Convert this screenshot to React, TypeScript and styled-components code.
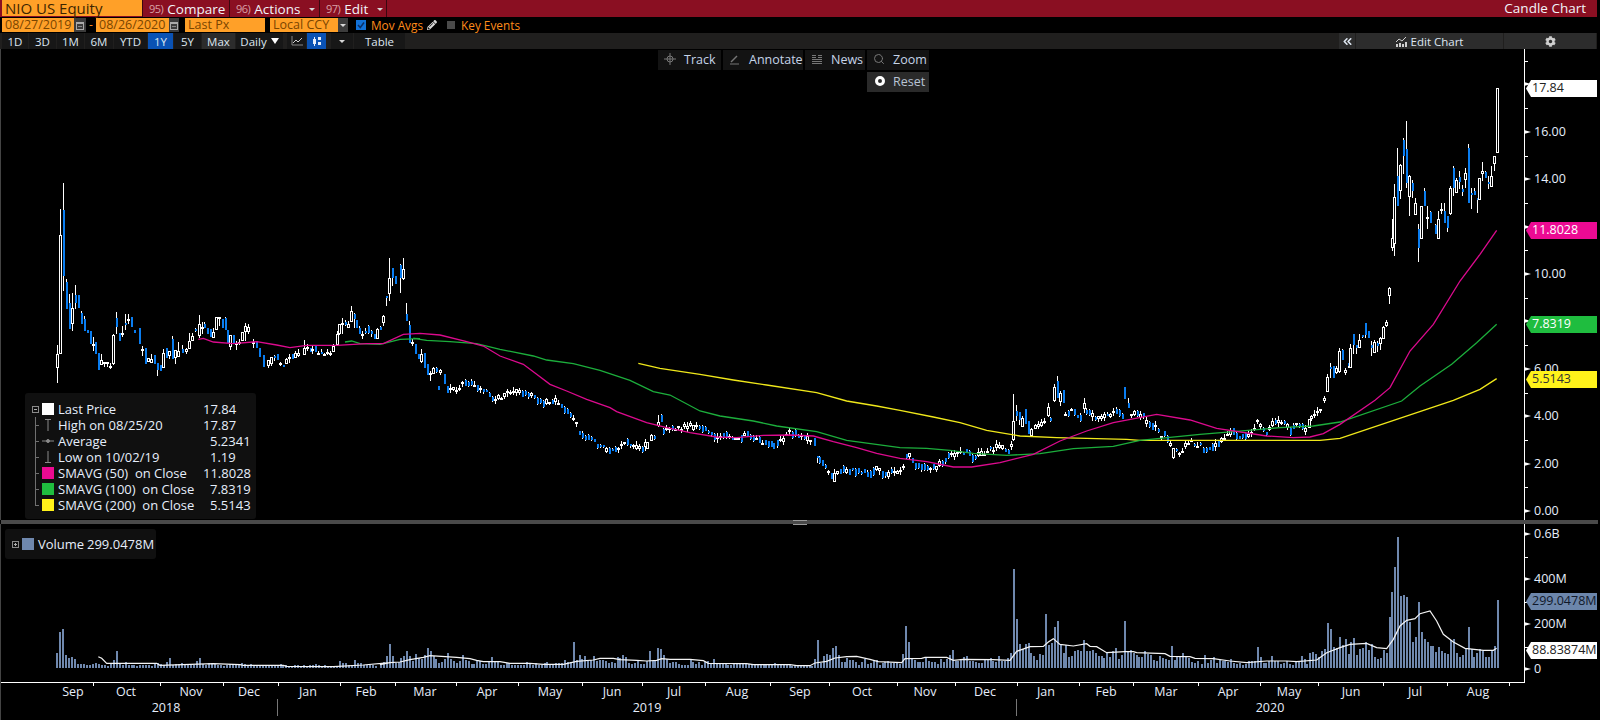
import React from "react";
import styled, { createGlobalStyle } from "styled-components";
import { FaCog, FaPencilAlt } from "react-icons/fa";
import { ChevronsLeft, Search } from "lucide-react";

type Pt = [number, number];
type Raw = [number, number, number, number?, number?, number?];
interface Candle {
  x: number;
  top: number;
  bot: number;
  hi: number;
  lo: number;
  blue: boolean;
}

const SANS = `"Open Sans", "Noto Sans", sans-serif`;
const AXIS_X = 1524;

const GlobalStyle = createGlobalStyle`
  html, body { margin: 0; padding: 0; background: #000; }
  body { font-family: ${SANS}; }
`;

// all series below are read off 3x crops, so each has an origin to convert from
const toPts = (ox: number, oy: number, list: number[][]): Pt[] =>
  list.map(([a, b]) => [ox + a / 3, oy + b / 3]);

const yAt = (pts: Pt[], x: number) => {
  for (let i = 1; i < pts.length; i++) {
    if (x <= pts[i][0]) {
      const [x0, y0] = pts[i - 1];
      const [x1, y1] = pts[i];
      return y0 + ((y1 - y0) * (x - x0)) / (x1 - x0 || 1);
    }
  }
  return pts[pts.length - 1][1];
};

const poly = (pts: Pt[]) => pts.map((p) => p.join(",")).join(" ");

const rng = (seed: number) => () => {
  seed = (seed + 0x6d2b79f5) | 0;
  let t = Math.imul(seed ^ (seed >>> 15), 1 | seed);
  t = (t + Math.imul(t ^ (t >>> 7), 61 | t)) ^ t;
  return ((t ^ (t >>> 14)) >>> 0) / 4294967296;
};

const raw = (ox: number, oy: number, list: Raw[]): Candle[] =>
  list.map(([zx, top, bot, hi, lo, blue]) => ({
    x: Math.round(ox + zx / 3),
    top: oy + top / 3,
    bot: oy + bot / 3,
    hi: oy + (hi ?? top) / 3,
    lo: oy + (lo ?? bot) / 3,
    blue: !!blue,
  }));

const START: Raw[] = [
  [172, 548, 590, 522, 635], [181, 192, 548, 114, 548], [190, 118, 315, 37, 360, 1],
  [198, 333, 413, 325, 413, 1], [207, 396, 473, 370, 473, 1], [216, 412, 458, 366, 480],
  [225, 372, 396, 342, 415, 1], [234, 372, 410, 372, 410, 1], [243, 425, 458, 420, 458, 1],
  [252, 443, 480, 435, 480, 1], [261, 478, 485, 478, 485, 1], [270, 480, 520, 480, 520, 1],
  [278, 518, 522, 498, 540], [285, 513, 548, 513, 548, 1], [294, 546, 597, 546, 597, 1],
  [303, 567, 583, 550, 583], [312, 572, 578, 572, 588], [321, 572, 578, 572, 588],
  [330, 585, 588, 575, 595], [340, 492, 578, 490, 582], [348, 440, 468, 423, 490, 1],
  [357, 487, 510, 487, 510, 1], [366, 487, 489, 465, 497], [375, 457, 463, 428, 478, 1],
  [384, 443, 445, 430, 460], [393, 437, 468, 437, 468, 1], [402, 477, 485, 477, 485, 1],
  [411, 478, 500, 478, 500, 1], [416, 472, 518, 472, 518, 1], [427, 533, 539, 525, 555],
  [435, 530, 578, 530, 578, 1], [445, 560, 572, 560, 572], [454, 565, 575, 550, 575],
  [463, 552, 580, 552, 580, 1], [472, 575, 597, 575, 614, 1], [480, 582, 600, 582, 600, 1],
  [490, 547, 590, 535, 590], [498, 532, 560, 532, 560, 1], [508, 540, 555, 540, 565],
  [516, 503, 565, 495, 565, 1], [525, 538, 560, 538, 578], [535, 540, 557, 512, 557],
  [546, 535, 547, 522, 547, 1], [558, 535, 543, 530, 548], [568, 511, 533, 487, 533],
  [577, 495, 509, 487, 509], [586, 473, 478, 470, 482, 1], [596, 460, 495, 432, 500],
  [605, 469, 471, 452, 490], [613, 458, 472, 452, 472, 1], [621, 470, 490, 470, 490, 1],
  [630, 475, 497, 475, 497, 1], [640, 483, 500, 470, 500], [649, 439, 478, 439, 478],
  [658, 437, 439, 437, 465], [666, 445, 470, 445, 470, 1], [675, 440, 478, 438, 478, 1],
  [681, 478, 517, 478, 517, 1], [691, 493, 528, 493, 536], [698, 492, 520, 492, 520, 1],
  [708, 516, 518, 510, 536], [717, 514, 516, 505, 522], [727, 482, 510, 482, 510],
  [736, 465, 482, 455, 510], [744, 468, 484, 458, 490], [752, 475, 518, 475, 522, 1],
  [760, 512, 514, 505, 530], [768, 510, 532, 510, 532, 1], [778, 530, 558, 530, 558, 1],
  [788, 552, 588, 552, 588, 1], [797, 590, 597, 585, 600, 1], [805, 567, 585, 567, 590],
  [814, 558, 578, 558, 585], [822, 556, 562, 552, 570, 1], [830, 550, 568, 548, 568, 1],
  [840, 577, 579, 572, 585], [848, 582, 587, 582, 587, 1], [858, 565, 578, 560, 578],
  [867, 557, 562, 550, 575], [876, 550, 565, 548, 565, 1], [885, 545, 562, 540, 562],
  [895, 545, 555, 535, 558], [905, 550, 557, 542, 557], [913, 530, 553, 508, 553],
  [921, 529, 531, 520, 540], [929, 530, 543, 530, 543, 1], [937, 533, 540, 525, 550],
  [945, 525, 543, 525, 543, 1], [955, 547, 549, 540, 552], [964, 544, 550, 535, 550, 1],
  [973, 550, 556, 545, 556], [982, 544, 546, 535, 552], [991, 545, 552, 540, 554],
  [1000, 525, 542, 520, 542], [1010, 488, 522, 480, 525], [1018, 458, 490, 458, 492],
  [1027, 457, 459, 440, 490], [1036, 452, 462, 448, 465, 1], [1045, 458, 470, 450, 472],
  [1054, 420, 452, 405, 452], [1063, 430, 445, 425, 470, 1], [1068, 447, 472, 447, 472, 1],
  [1077, 470, 488, 465, 490, 1], [1087, 488, 495, 480, 505], [1096, 480, 485, 470, 490, 1],
  [1105, 465, 485, 462, 490, 1], [1114, 480, 490, 478, 498, 1], [1122, 490, 503, 490, 503, 1],
  [1132, 475, 503, 470, 503], [1140, 468, 478, 465, 478, 1], [1150, 435, 457, 432, 465],
  [1158, 375, 380, 375, 405, 1], [1168, 320, 368, 262, 390], [1176, 292, 320, 290, 345, 1],
  [1185, 315, 340, 315, 340, 1], [1193, 302, 320, 295, 325], [1201, 282, 320, 280, 365, 1],
  [1210, 295, 325, 262, 328], [1219, 430, 450, 397, 450, 1], [1227, 462, 515, 450, 515, 1],
  [1236, 514, 516, 505, 525], [1245, 520, 548, 520, 548, 1], [1254, 545, 563, 545, 563, 1],
];

const MID_A: Raw[] = [
  [38, 62, 72, 55, 78], [45, 70, 98, 70, 98, 1], [53, 98, 113, 98, 113, 1], [64, 100, 122, 85, 125],
  [72, 97, 140, 97, 140, 1], [81, 130, 162, 130, 162, 1], [90, 155, 163, 150, 180],
  [100, 140, 158, 138, 158], [108, 140, 152, 138, 155, 1], [120, 148, 155, 145, 162],
  [132, 160, 190, 160, 190, 1], [140, 195, 215, 195, 215, 1], [742, 363, 384, 363, 384],
  [752, 343, 360, 340, 360], [770, 318, 340, 318, 340], [775, 302, 315, 283, 318],
  [782, 283, 302, 280, 302, 1], [1118, 365, 384, 365, 384, 1], [1242, 352, 375, 352, 375, 1],
  [1250, 406, 412, 406, 425, 1], [1292, 455, 475, 455, 475, 1], [1303, 455, 482, 445, 482],
];

const MID_B: Raw[] = [
  [340, 240, 298, 160, 300], [348, 210, 225, 192, 240, 1], [357, 212, 238, 212, 252, 1],
  [367, 232, 258, 226, 258], [375, 205, 250, 205, 250, 1], [383, 240, 278, 240, 278, 1],
  [394, 265, 285, 262, 288], [443, 198, 225, 185, 228], [455, 172, 188, 172, 190],
  [463, 138, 180, 130, 182], [470, 120, 170, 105, 172, 1], [481, 155, 182, 150, 195],
  [490, 148, 185, 148, 185, 1], [545, 215, 258, 212, 258], [553, 185, 205, 172, 215],
  [672, 138, 175, 138, 175, 1], [684, 185, 202, 172, 202, 1], [818, 322, 350, 322, 355],
  [1228, 235, 262, 235, 262], [1273, 170, 198, 170, 198], [1283, 108, 152, 98, 152],
  [1290, 75, 110, 75, 110, 1], [1298, 78, 112, 72, 115, 1], [1310, 80, 95, 75, 98],
];

const END: Raw[] = [
  [133, 950, 960, 945, 965], [142, 888, 932, 880, 932], [151, 858, 862, 845, 890, 1],
  [160, 855, 890, 855, 892, 1], [169, 860, 875, 855, 878], [178, 810, 872, 800, 875],
  [187, 808, 838, 805, 838, 1], [196, 868, 875, 860, 882], [205, 845, 855, 845, 860, 1],
  [211, 800, 862, 790, 862], [219, 758, 792, 758, 820, 1], [228, 792, 802, 792, 820, 1],
  [237, 778, 802, 760, 802], [246, 762, 768, 762, 770, 1], [255, 726, 762, 726, 772, 1],
  [264, 750, 772, 750, 772, 1], [273, 792, 800, 780, 825, 1], [282, 783, 815, 778, 815],
  [291, 785, 795, 780, 812, 1], [300, 772, 790, 768, 808], [310, 738, 775, 735, 775],
  [319, 723, 735, 717, 738], [328, 621, 645, 618, 668], [337, 470, 502, 415, 510],
  [343, 348, 488, 310, 524], [351, 285, 375, 200, 375, 1], [361, 252, 330, 250, 355],
  [369, 178, 225, 172, 278, 1], [379, 205, 305, 120, 320, 1], [388, 285, 347, 283, 405],
  [396, 305, 330, 297, 350, 1], [406, 367, 403, 352, 403], [415, 445, 500, 428, 542, 1],
  [424, 376, 475, 376, 475], [433, 330, 375, 322, 375, 1], [442, 407, 409, 375, 445],
  [451, 393, 425, 390, 425, 1], [460, 447, 480, 447, 510], [465, 432, 458, 428, 458, 1],
  [475, 415, 473, 390, 475], [484, 385, 387, 365, 400], [492, 390, 425, 365, 425, 1],
  [501, 405, 440, 405, 452, 1], [511, 321, 398, 315, 402], [519, 262, 320, 255, 345, 1],
  [529, 298, 335, 290, 335], [537, 287, 304, 270, 325, 1], [546, 323, 333, 312, 345, 1],
  [556, 277, 298, 262, 320], [564, 201, 365, 190, 365, 1], [573, 335, 342, 322, 385, 1],
  [582, 330, 342, 320, 342, 1], [591, 352, 358, 352, 395, 1], [598, 290, 358, 290, 358],
  [607, 270, 278, 243, 300], [615, 273, 290, 270, 292, 1], [624, 303, 310, 285, 325, 1],
  [634, 285, 318, 255, 318], [643, 226, 250, 224, 270], [652, 20, 217, 20, 217],
];

// mid-price path for the long stretch that is generated instead of listed
const PATH: Pt[] = [
  ...toPts(400, 320, [
    [150, 205], [170, 205], [190, 180], [230, 195], [265, 220], [272, 240], [290, 235], [320, 215],
    [350, 215], [380, 215], [400, 230], [430, 250], [460, 235], [490, 265], [510, 285], [525, 300],
    [537, 330], [550, 350], [575, 355], [590, 372], [620, 382], [640, 392], [660, 375], [675, 365],
    [700, 380], [720, 384], [742, 372], [795, 320], [830, 325], [875, 312], [915, 320], [940, 350],
    [970, 345], [1010, 355], [1040, 342], [1070, 355], [1118, 375], [1140, 360], [1165, 335],
    [1205, 345], [1240, 362], [1250, 410], [1272, 430], [1292, 470], [1310, 452], [1340, 445],
    [1370, 452], [1410, 458], [1425, 445], [1460, 460],
  ]),
  ...toPts(900, 340, [
    [5, 385], [15, 355], [25, 340], [45, 370], [75, 378], [105, 378], [125, 368], [155, 338], [175, 338],
    [195, 332], [215, 348], [250, 338], [265, 325], [300, 316], [330, 330], [340, 270], [410, 258],
    [430, 240], [500, 215], [520, 205], [535, 230], [565, 210], [578, 230], [595, 230], [610, 220],
    [630, 225], [648, 210], [665, 232], [695, 215], [715, 215], [735, 235], [745, 255], [765, 258],
    [780, 285], [790, 280], [800, 295], [818, 335], [830, 330], [842, 340], [852, 320], [868, 300],
    [885, 310], [905, 315], [915, 335], [940, 310], [960, 305], [975, 290], [990, 272], [1020, 285],
    [1050, 285], [1070, 240], [1080, 255], [1095, 275], [1115, 250], [1135, 240], [1155, 250],
    [1170, 265], [1190, 248], [1205, 250], [1215, 270], [1240, 215], [1265, 210],
  ]),
];

const buildCandles = (): Candle[] => {
  const slots = new Map<number, Candle>();
  const put = (c: Candle) => slots.set(Math.round(c.x / 3), c);
  [...raw(0, 170, START), ...raw(400, 320, MID_A), ...raw(900, 340, MID_B), ...raw(1280, 80, END)].forEach(put);
  const r = rng(51);
  for (let x = 420; x < 1322; x += 3) {
    if (slots.has(Math.round(x / 3))) continue;
    const mid = yAt(PATH, x) + (r() - 0.5) * 4;
    const falling = yAt(PATH, x + 6) > yAt(PATH, x - 6);
    const blue = r() < (falling ? 0.7 : 0.3);
    const half = blue ? 1 + r() * 2.5 : r() < 0.4 ? 0.5 : 1 + r() * 1.5;
    put({
      x,
      top: mid - half,
      bot: mid + half,
      hi: mid - half - (blue ? r() * 1.5 : r() * 4),
      lo: mid + half + (blue ? r() * 1.5 : r() * 4),
      blue,
    });
  }
  return [...slots.values()].sort((a, b) => a.x - b.x);
};

const PINK: Pt[] = [
  ...toPts(0, 170, [[595, 505], [610, 502], [640, 513], [700, 518], [770, 512], [830, 522], [870, 530], [920, 523], [1010, 523], [1100, 518], [1150, 518], [1210, 490]]),
  ...toPts(400, 320, [[60, 37], [120, 42], [200, 62], [250, 75], [300, 105], [370, 130], [410, 160], [450, 190], [500, 210], [560, 235], [630, 260], [650, 272], [740, 305], [800, 320], [870, 335], [950, 348], [1010, 350], [1090, 343], [1170, 342], [1240, 345], [1300, 362], [1370, 380], [1430, 397], [1500, 412]]),
  ...toPts(900, 340, [[80, 362], [160, 378], [215, 378], [300, 365], [400, 340], [480, 300], [560, 270], [640, 245], [770, 220], [870, 237], [950, 262], [1100, 285], [1180, 290], [1230, 288], [1270, 278], [1320, 250]]),
  ...toPts(1280, 80, [[285, 958], [330, 920], [390, 810], [460, 730], [540, 600], [600, 520], [650, 448]]),
];

const GREEN: Pt[] = [
  ...toPts(0, 170, [[1035, 513], [1055, 510], [1080, 518], [1140, 520], [1200, 505], [1260, 503]]),
  ...toPts(400, 320, [[40, 52], [80, 58], [150, 62], [230, 68], [300, 85], [400, 105], [440, 117], [520, 128], [600, 148], [690, 178], [760, 212], [810, 222], [900, 270], [960, 285], [1060, 300], [1130, 315], [1250, 332], [1340, 358], [1500, 380]]),
  ...toPts(900, 340, [[80, 322], [150, 328], [220, 337], [320, 343], [420, 338], [520, 323], [640, 316], [720, 298], [900, 280], [1000, 272], [1140, 260], [1240, 255], [1320, 243]]),
  ...toPts(1280, 80, [[365, 960], [420, 915], [515, 850], [590, 785], [650, 730]]),
];

const YELLOW: Pt[] = [
  ...toPts(400, 320, [[715, 127], [780, 142], [900, 160], [1000, 177], [1100, 192], [1250, 215], [1340, 240], [1430, 255], [1500, 268]]),
  ...toPts(900, 340, [[100, 228], [180, 245], [260, 268], [360, 285], [470, 290], [680, 295], [720, 298], [1000, 298], [1260, 298], [1320, 292]]),
  ...toPts(1280, 80, [[520, 958], [600, 925], [650, 893]]),
];

const VOL_AVG: Pt[] = [
  ...toPts(0, 510, [[295, 437], [305, 442], [320, 457], [470, 457], [480, 463], [640, 458], [720, 461], [730, 463], [850, 463], [860, 466], [1000, 467], [1090, 462], [1170, 455]]),
  ...toPts(380, 512, [[0, 455], [30, 449], [60, 447], [90, 440], [130, 433], [150, 428], [230, 433], [270, 437], [290, 442], [310, 446], [360, 446], [390, 451], [450, 451], [490, 454], [550, 454], [590, 445], [640, 441], [660, 436], [700, 436], [720, 440], [770, 442], [800, 444], [830, 442], [845, 437], [870, 439], [930, 439], [970, 443], [985, 451], [1100, 452], [1120, 455], [1230, 455], [1250, 458]]),
  ...toPts(790, 555, [[20, 329], [60, 329], [75, 321], [110, 316], [135, 306], [170, 302], [200, 301], [240, 310], [265, 317], [335, 320], [345, 308], [395, 307], [405, 304], [470, 304], [490, 313], [520, 310], [610, 311], [660, 313], [680, 286], [720, 272], [760, 271], [775, 258], [790, 248], [810, 265], [850, 270], [890, 263], [900, 271], [920, 272], [950, 290], [1005, 287], [1030, 287], [1040, 290], [1125, 293], [1140, 301], [1200, 302], [1215, 307]]),
  ...toPts(1200, 510, [[40, 443], [90, 450], [140, 455], [200, 450], [260, 450], [290, 452], [350, 447], [380, 425], [420, 410], [450, 400], [500, 397], [530, 410], [560, 413], [580, 385], [600, 345], [620, 328], [645, 323], [660, 308], [690, 300], [710, 330], [730, 370], [760, 393], [795, 412], [850, 418], [880, 418], [890, 412]]),
];

const VOL_LEFT = [15, 36, 39, 13, 10, 11, 9, 4, 4, 4, 3, 3, 4, 5, 4, 3, 3, 2, 4, 8, 17, 4, 3, 6, 3, 3, 3, 2, 3, 3, 3, 3, 2, 5, 5, 4, 3, 6, 10, 3, 4, 4, 5, 4, 3, 3, 3, 7, 10, 4, 3, 5, 5, 4, 3, 3, 2, 3, 4, 4, 3, 4, 5, 4, 3, 4, 2, 3, 3, 2, 3, 2, 3, 2, 3, 4, 3, 3, 2, 2, 3, 3, 2, 3, 2, 3, 3, 4, 3, 2, 3, 2, 2, 2, 2, 7, 5, 5, 3, 3, 8, 5, 5, 3, 3, 3, 3, 2];
const VOL_A = [3, 6, 12, 24, 12, 5, 6, 10, 12, 17, 12, 7, 14, 10, 9, 13, 20, 17, 12, 9, 5, 6, 9, 15, 9, 7, 5, 7, 13, 8, 7, 4, 4, 7, 7, 4, 4, 6, 11, 6, 6, 3, 3, 5, 5, 3, 3, 3, 3, 3, 6, 5, 3, 5, 3, 3, 5, 6, 3, 3, 5, 5, 5, 8, 6, 6, 26, 8, 13, 9, 12, 7, 8, 12, 7, 8, 8, 7, 5, 6, 5, 11, 10, 13, 11, 5, 4, 5, 7, 4, 4, 7, 17, 7, 7, 20, 19, 13, 9, 5, 6, 6, 4, 3, 3, 3, 8, 6, 4, 6, 3, 6, 7, 5, 9, 5, 4, 4, 4, 3, 3, 4, 5, 4, 4, 4, 4, 3, 4, 4, 3, 3, 3, 3, 3, 5, 3, 4, 3, 4, 3, 3, 3, 3, 2, 3];
const VOL_B = [2, 2, 2, 2, 2, 2, 2, 2, 9, 28, 5, 12, 14, 13, 20, 22, 13, 6, 6, 10, 8, 8, 6, 3, 6, 9, 4, 5, 8, 8, 3, 5, 6, 7, 5, 5, 5, 4, 14, 42, 26, 9, 8, 6, 6, 6, 10, 7, 6, 6, 4, 9, 6, 9, 13, 18, 7, 7, 8, 11, 12, 7, 7, 6, 5, 5, 9, 9, 10, 7, 6, 12, 7, 7, 10, 15, 99, 49, 24, 19, 24, 25, 15, 12, 8, 14, 13, 54, 23, 25, 41, 47, 23, 15, 23, 11, 12, 17, 18, 17, 28, 17, 17, 18, 15, 12, 12, 10, 15, 11, 17, 20, 9, 13, 47, 17, 18, 15, 13, 11, 11, 17, 14, 13, 8, 7, 12, 10, 9, 8, 22, 8, 12, 11, 15, 12, 10, 6, 5, 7];
const VOL_C = [4, 13, 5, 8, 11, 5, 8, 7, 7, 6, 9, 5, 4, 5, 3, 4, 7, 7, 7, 21, 11, 5, 5, 7, 12, 7, 7, 4, 5, 7, 4, 3, 6, 6, 12, 9, 4, 15, 16, 14, 11, 17, 19, 45, 39, 21, 20, 31, 23, 29, 14, 26, 30, 13, 19, 20, 26, 18, 24, 11, 9, 10, 18, 15, 51, 76, 101, 131, 72, 73, 71, 46, 26, 31, 66, 36, 29, 26, 22, 22, 16, 21, 17, 15, 14, 28, 29, 15, 11, 13, 20, 41, 19, 11, 15, 19, 17, 11, 11, 17, 22, 68];

const buildVolumes = () => {
  const bars: { x: number; h: number }[] = [];
  const run = (start: number, step: number, end: number, list: number[]) =>
    list.forEach((h, i) => {
      const x = Math.round(start + i * step);
      if (x < end) bars.push({ x, h });
    });
  run(56, 2.98, 379, VOL_LEFT);
  run(380, 2.92, 790, VOL_A);
  run(791, 2.92, 1200, VOL_B);
  run(1201, 2.93, 1500, VOL_C);
  return bars;
};

const priceY = (p: number) => 510 - 23.7 * p;
const volY = (m: number) => 668 - 0.2245 * m;

const MONTHS: [string, number][] = [
  ["Sep", 73], ["Oct", 126], ["Nov", 191], ["Dec", 249], ["Jan", 308], ["Feb", 366], ["Mar", 425],
  ["Apr", 487], ["May", 550], ["Jun", 612], ["Jul", 674], ["Aug", 737], ["Sep", 800], ["Oct", 862],
  ["Nov", 925], ["Dec", 985], ["Jan", 1046], ["Feb", 1106], ["Mar", 1166], ["Apr", 1228], ["May", 1289],
  ["Jun", 1351], ["Jul", 1415], ["Aug", 1478],
];
const MONTH_TICKS = [93, 160, 223, 278, 340, 395, 456, 518, 582, 642, 705, 770, 829, 897, 955, 1017, 1079, 1133, 1198, 1260, 1318, 1383, 1447, 1509];

const Page = styled.div`
  width: 1600px;
  height: 720px;
  background: #000;
  overflow: hidden;
  display: flex;
  flex-direction: column;
  font-family: ${SANS};
`;

const TopBar = styled.div`
  width: 1597px;
  height: 17px;
  flex: none;
  background: #8a0f22;
  display: flex;
  color: #f2f4fa;
  font-size: 13.5px;
  line-height: 16px;
`;

const Ticker = styled.div`
  width: 137px;
  margin-left: 2px;
  padding-left: 3px;
  height: 16px;
  background: #ffa028;
  color: #3d2500;
  font-size: 15px;
  line-height: 16px;
  white-space: nowrap;
`;

const MenuButton = styled.div<{ $w: number }>`
  width: ${(p) => p.$w}px;
  box-sizing: border-box;
  padding-left: 6px;
  border-left: 1px solid #3a0710;
  display: flex;
  align-items: center;
  gap: 4px;
  white-space: nowrap;
  &:nth-of-type(4) {
    border-right: 1px solid #3a0710;
  }
`;

const MenuNum = styled.span`
  color: #d9a0a8;
  font-size: 11px;
  letter-spacing: -0.5px;
`;

const Caret = styled.span`
  width: 0;
  height: 0;
  flex: none;
  border-left: 3px solid transparent;
  border-right: 3px solid transparent;
  border-top: 3px solid #d8d8d8;
`;

const MenuCaret = styled(Caret)`
  margin: 1px 0 0 5px;
`;

const DailyCaret = styled(Caret)`
  border-left-width: 4px;
  border-right-width: 4px;
  border-top: 6px solid #fff;
`;

const ChartTitle = styled.div`
  margin-left: auto;
  padding-right: 11px;
`;

const ControlRow = styled.div`
  height: 14px;
  flex: none;
  margin-top: 1px;
  padding-bottom: 1px;
  display: flex;
  align-items: stretch;
  font-size: 12px;
  line-height: 14px;
`;

const Field = styled.div<{ $w: number; $ml?: number }>`
  width: ${(p) => p.$w}px;
  margin-left: ${(p) => p.$ml ?? 0}px;
  box-sizing: border-box;
  padding-left: 3px;
  background: #ffa028;
  color: #7a4500;
  font-size: 12.5px;
  white-space: nowrap;
`;

const SideButton = styled.div<{ $w: number; $ml?: number }>`
  width: ${(p) => p.$w}px;
  margin-left: ${(p) => p.$ml ?? 0}px;
  background: #3c3c3c;
  display: flex;
  align-items: center;
  justify-content: center;
`;

const Dash = styled.span`
  width: 10px;
  text-align: center;
  color: #ff8c1a;
`;

const Check = styled.div`
  width: 10px;
  height: 10px;
  margin: 2px 0 0 8px;
  background: #1272d8;
  display: flex;
`;

const OffBox = styled.div`
  width: 8px;
  height: 8px;
  margin: 3px 0 0 10px;
  background: #4a4a4a;
`;

const Amber = styled.span<{ $ml: number }>`
  margin-left: ${(p) => p.$ml}px;
  color: #ff8c1a;
  font-size: 11.8px;
  white-space: nowrap;
`;

const PencilWrap = styled.span`
  margin: 2px 0 0 4px;
  color: #d8d8d8;
  display: flex;
  font-size: 10px;
`;

const RangeRow = styled.div`
  width: 1597px;
  height: 16px;
  flex: none;
  box-sizing: border-box;
  padding-left: 2px;
  background: #201f1e;
  display: flex;
  font-size: 11.5px;
  line-height: 15px;
  color: #dfe7f2;
`;

const RangeButton = styled.div<{ $w: number; $ml?: number; $tone?: "active" | "raised" | "dark" }>`
  width: ${(p) => p.$w}px;
  margin-left: ${(p) => p.$ml ?? 0}px;
  margin-right: 1px;
  flex: none;
  display: flex;
  align-items: center;
  justify-content: center;
  gap: 4px;
  background: ${(p) =>
    p.$tone === "active" ? "#0a52b4" : p.$tone === "raised" ? "#2c2c2c" : "#171717"};
`;

const RangeSpacer = styled.div`
  flex: 1;
`;

const PricePanel = styled.div`
  position: relative;
  height: 471px;
  flex: none;
`;

const VolumePanel = styled.div`
  position: relative;
  flex: 1;
`;

const ChartSvg = styled.svg`
  display: block;
  width: 1600px;
`;

const AxisText = styled.text`
  font-family: ${SANS};
  font-size: 12.5px;
  fill: #e6eefb;
  dominant-baseline: central;
`;

const Divider = styled.div`
  height: 4px;
  flex: none;
  width: 1597px;
  background: #4a4a4a;
  display: flex;
  justify-content: center;
  align-items: center;
  margin-left: 1px;
`;

const Grip = styled.div`
  width: 14px;
  height: 3px;
  border-top: 1px solid #9a9a9a;
  border-bottom: 1px solid #9a9a9a;
`;

const FloatBar = styled.div`
  position: absolute;
  left: 658px;
  top: 1px;
  display: flex;
  gap: 2px;
  font-size: 12.5px;
  color: #c6d4e8;
`;

const FloatButton = styled.div<{ $w: number }>`
  width: ${(p) => p.$w}px;
  height: 20px;
  background: #131313;
  display: flex;
  align-items: center;
  gap: 8px;
  padding: 0 0 2px 6px;
  box-sizing: border-box;
`;

const ResetButton = styled.div`
  position: absolute;
  left: 867px;
  top: 23px;
  width: 62px;
  height: 20px;
  background: #2a2a2a;
  display: flex;
  align-items: center;
  gap: 8px;
  padding: 0 0 2px 8px;
  box-sizing: border-box;
  font-size: 12.5px;
  color: #b9c4d4;
`;

const RadioDot = styled.span`
  width: 4px;
  height: 4px;
  border: 3px solid #fff;
  border-radius: 50%;
`;

const Tag = styled.div<{ $top: number; $bg: string; $fg: string }>`
  position: absolute;
  left: 1526px;
  top: ${(p) => p.$top}px;
  width: 71px;
  height: 17px;
  box-sizing: border-box;
  padding-left: 6px;
  background: ${(p) => p.$bg};
  color: ${(p) => p.$fg};
  font-size: 12.5px;
  line-height: 16px;
  white-space: nowrap;
  clip-path: polygon(5px 0, 100% 0, 100% 100%, 5px 100%, 0 50%);
`;

const Legend = styled.div`
  position: absolute;
  left: 25px;
  top: 344px;
  width: 231px;
  height: 126px;
  box-sizing: border-box;
  padding: 8px 0 0 7px;
  background: #101010;
  border-radius: 3px;
  font-size: 13px;
  color: #e6eefb;
`;

const LegendRow = styled.div`
  height: 16px;
  display: flex;
  align-items: center;
  line-height: 15px;
`;

const TreeCell = styled.div<{ $last?: boolean }>`
  position: relative;
  width: 10px;
  height: 16px;
  flex: none;
  &::before {
    content: "";
    position: absolute;
    left: 3px;
    top: 0;
    height: ${(p) => (p.$last ? 8 : 16)}px;
    border-left: 1px solid #707070;
  }
  &::after {
    content: "";
    position: absolute;
    left: 3px;
    top: 8px;
    width: 4px;
    border-top: 1px solid #707070;
  }
`;

const ExpandBox = styled.div<{ $plus?: boolean }>`
  position: relative;
  width: 7px;
  height: 7px;
  flex: none;
  margin-right: 3px;
  border: 1px solid #8a8a8a;
  box-sizing: border-box;
  background: #101010;
  &::after {
    content: "";
    position: absolute;
    left: 1px;
    top: 2px;
    width: 3px;
    height: 1px;
    background: #b0b0b0;
  }
  &::before {
    content: "";
    display: ${(p) => (p.$plus ? "block" : "none")};
    position: absolute;
    left: 2px;
    top: 1px;
    width: 1px;
    height: 3px;
    background: #b0b0b0;
  }
`;

const Swatch = styled.span<{ $color: string }>`
  width: 12px;
  height: 12px;
  flex: none;
  background: ${(p) => p.$color};
`;

const MarkSvg = styled.svg`
  width: 12px;
  height: 14px;
  flex: none;
`;

const LegendName = styled.span`
  width: 145px;
  margin-left: 4px;
  white-space: pre;
`;

const LegendValue = styled.span<{ $indent?: boolean }>`
  padding-left: ${(p) => (p.$indent ? 7 : 0)}px;
`;

const VolumeLegend = styled.div`
  position: absolute;
  left: 5px;
  top: 5px;
  width: 151px;
  height: 30px;
  border-radius: 3px;
  background: #101010;
  display: flex;
  align-items: center;
  padding-left: 7px;
  box-sizing: border-box;
  font-size: 13px;
  line-height: 15px;
  color: #e6eefb;
`;

const VolumeName = styled.span`
  margin-left: 4px;
  width: 49px;
`;

const Candles: React.FC = () => (
  <g shapeRendering="crispEdges">
    {buildCandles().map((c) => {
      const y = Math.round(c.top);
      const h = Math.max(Math.round(c.bot) - y, 2);
      const hi = Math.round(c.hi);
      const lo = Math.round(c.lo);
      return (
        <g key={c.x}>
          <rect x={c.x} y={hi} width={1} height={Math.max(lo - hi, 1)} fill="#fff" />
          {c.blue ? (
            <rect x={c.x} y={y} width={2} height={h} fill="#0a7df0" />
          ) : (
            <>
              <rect x={c.x - 1} y={y} width={3} height={h} fill="#fff" />
              {h > 2 && <rect x={c.x} y={y + 1} width={1} height={h - 2} fill="#000" />}
            </>
          )}
        </g>
      );
    })}
  </g>
);

// 8.00 and 12.00 sit fully behind the moving average tags, so they get no label
const HIDDEN_LABELS = [8, 12, 18];

const PriceChart: React.FC = () => {
  const ticks = [];
  for (let p = 1; p <= 19; p += 2) {
    ticks.push(<rect key={p} x={AXIS_X} y={Math.round(priceY(p))} width={4} height={1} fill="#fff" />);
  }
  for (let p = 0; p <= 18; p += 2) {
    const y = Math.round(priceY(p));
    ticks.push(<polygon key={`m${p}`} points={`${AXIS_X},${y - 2} ${AXIS_X + 7},${y} ${AXIS_X},${y + 2}`} fill="#fff" />);
    if (!HIDDEN_LABELS.includes(p)) {
      ticks.push(
        <AxisText key={`t${p}`} x={AXIS_X + 10} y={y - 1}>
          {p.toFixed(2)}
        </AxisText>
      );
    }
  }
  return (
    <ChartSvg height={471} viewBox="0 48 1600 471">
      <rect x={0} y={48} width={1} height={471} fill="#444" />
      <rect x={AXIS_X} y={48} width={1} height={471} fill="#fff" />
      {ticks}
      <Candles />
      <polyline points={poly(YELLOW)} fill="none" stroke="#f0e81a" strokeWidth={1.3} />
      <polyline points={poly(GREEN)} fill="none" stroke="#1cae3c" strokeWidth={1.3} />
      <polyline points={poly(PINK)} fill="none" stroke="#dc0a8e" strokeWidth={1.3} />
    </ChartSvg>
  );
};

const VolumeChart: React.FC = () => (
  <ChartSvg height={197} viewBox="0 523 1600 197">
    <rect x={0} y={523} width={1} height={197} fill="#444" />
    <g shapeRendering="crispEdges">
      <rect x={AXIS_X} y={523} width={1} height={158} fill="#fff" />
      <rect x={1} y={681} width={AXIS_X} height={1} fill="#fff" />
      {buildVolumes().map((b) => (
        <rect key={b.x} x={b.x} y={667 - b.h} width={2} height={b.h} fill="#6f88ae" />
      ))}
      {[100, 300, 500].map((m) => (
        <rect key={m} x={AXIS_X} y={Math.round(volY(m))} width={4} height={1} fill="#fff" />
      ))}
      {MONTH_TICKS.map((x) => (
        <rect key={x} x={x} y={681} width={1} height={4} fill="#fff" />
      ))}
      {[277, 1016].map((x) => (
        <rect key={x} x={x} y={698} width={1} height={17} fill="#777" />
      ))}
    </g>
    <polyline points={poly(VOL_AVG)} fill="none" stroke="#f4f4f4" strokeWidth={1.2} />
    {[
      ["0.6B", 600],
      ["400M", 400],
      ["200M", 200],
      ["0", 0],
    ].map(([label, m]) => {
      const y = Math.round(volY(m as number));
      return (
        <g key={label}>
          <polygon points={`${AXIS_X},${y - 2} ${AXIS_X + 7},${y} ${AXIS_X},${y + 2}`} fill="#fff" />
          <AxisText x={AXIS_X + 10} y={y - 1}>
            {label}
          </AxisText>
        </g>
      );
    })}
    {MONTHS.map(([m, x]) => (
      <AxisText key={x} x={x} y={690} textAnchor="middle">
        {m}
      </AxisText>
    ))}
    {[
      ["2018", 166],
      ["2019", 647],
      ["2020", 1270],
    ].map(([y, x]) => (
      <AxisText key={y} x={x as number} y={706} textAnchor="middle">
        {y}
      </AxisText>
    ))}
  </ChartSvg>
);

const CalendarIcon: React.FC = () => (
  <svg width="8" height="9" viewBox="0 0 8 9">
    <rect x="0.5" y="1.5" width="7" height="7" fill="none" stroke="#aaa" />
    <rect x="0" y="1" width="8" height="2" fill="#aaa" />
    <rect x="2" y="5" width="4" height="1" fill="#888" />
  </svg>
);

const CheckMark: React.FC = () => (
  <svg width="10" height="10" viewBox="0 0 10 10" fill="none" stroke="#0b2f66" strokeWidth="1.5">
    <path d="M2 5 4.3 7.5 8 2.5" />
  </svg>
);

const CrossIcon: React.FC = () => (
  <svg width="12" height="12" viewBox="0 0 12 12" fill="none" stroke="#777">
    <circle cx="6" cy="6" r="3" />
    <path d="M6 0v12M0 6h12" />
  </svg>
);

const AnnotateIcon: React.FC = () => (
  <svg width="12" height="12" viewBox="0 0 12 12" fill="none" stroke="#777">
    <path d="M2 9 8 3" strokeWidth="1.5" />
    <path d="M1 11h9" />
  </svg>
);

const NewsIcon: React.FC = () => (
  <svg width="12" height="12" viewBox="0 0 12 12" stroke="#777" shapeRendering="crispEdges">
    <path d="M1 2h4M1 4h4M7 2h4M7 4h4M1 6h10M1 8h10M1 10h10" />
  </svg>
);

const LineIcon: React.FC = () => (
  <svg width="12" height="10" viewBox="0 0 12 10" fill="none" stroke="#cfcfcf">
    <path d="M1 0v9h11" stroke="#888" />
    <path d="M2 7 5 4 7 6 11 2" />
  </svg>
);

const CandleIcon: React.FC = () => (
  <svg width="8" height="11" viewBox="0 0 8 11" fill="#e6eefb" shapeRendering="crispEdges">
    <rect x="0" y="3" width="3" height="5" />
    <rect x="1" y="1" width="1" height="9" />
    <rect x="5" y="1" width="3" height="3" />
    <rect x="5" y="6" width="3" height="3" />
  </svg>
);

const EditChartIcon: React.FC = () => (
  <svg width="11" height="11" viewBox="0 0 11 11" fill="none" stroke="#cfcfcf">
    <path d="M0 6 3 3 6 5 10 1" />
    <path d="M1 11V8M4 11V7M7 11V8M10 11V6" strokeWidth="2" />
  </svg>
);

const HighMark: React.FC = () => (
  <MarkSvg viewBox="0 0 12 14" stroke="#8a8a8a">
    <path d="M3 1.5h6M6 1.5V13" />
  </MarkSvg>
);

const AvgMark: React.FC = () => (
  <MarkSvg viewBox="0 0 12 14" stroke="#8a8a8a" fill="#8a8a8a">
    <path d="M0 7h12" />
    <circle cx="6" cy="7" r="1.5" />
  </MarkSvg>
);

const LowMark: React.FC = () => (
  <MarkSvg viewBox="0 0 12 14" stroke="#8a8a8a">
    <path d="M3 12.5h6M6 12.5V1" />
  </MarkSvg>
);

const RANGES: { label: string; w: number; tone?: "active" | "raised" }[] = [
  { label: "1D", w: 26 },
  { label: "3D", w: 27 },
  { label: "1M", w: 27 },
  { label: "6M", w: 28 },
  { label: "YTD", w: 33 },
  { label: "1Y", w: 25, tone: "active" },
  { label: "5Y", w: 27 },
  { label: "Max", w: 33, tone: "raised" },
];

const App: React.FC = () => (
  <Page>
    <GlobalStyle />
    <TopBar>
      <Ticker>NIO US Equity</Ticker>
      <MenuButton $w={87}>
        <MenuNum>95)</MenuNum> Compare
      </MenuButton>
      <MenuButton $w={90}>
        <MenuNum>96)</MenuNum> Actions
        <MenuCaret />
      </MenuButton>
      <MenuButton $w={68}>
        <MenuNum>97)</MenuNum> Edit
        <MenuCaret />
      </MenuButton>
      <ChartTitle>Candle Chart</ChartTitle>
    </TopBar>
    <ControlRow>
      <Field $w={72} $ml={2}>08/27/2019</Field>
      <SideButton $w={12}>
        <CalendarIcon />
      </SideButton>
      <Dash>-</Dash>
      <Field $w={73}>08/26/2020</Field>
      <SideButton $w={10}>
        <CalendarIcon />
      </SideButton>
      <Field $w={80} $ml={6}>Last Px</Field>
      <Field $w={68} $ml={5}>Local CCY</Field>
      <SideButton $w={10}>
        <Caret />
      </SideButton>
      <Check>
        <CheckMark />
      </Check>
      <Amber $ml={5}>Mov Avgs</Amber>
      <PencilWrap>
        <FaPencilAlt />
      </PencilWrap>
      <OffBox />
      <Amber $ml={6}>Key Events</Amber>
    </ControlRow>
    <RangeRow>
      {RANGES.map((r) => (
        <RangeButton key={r.label} $w={r.w} $tone={r.tone ?? "dark"}>
          {r.label}
        </RangeButton>
      ))}
      <RangeButton $w={47} $tone="dark">
        Daily <DailyCaret />
      </RangeButton>
      <RangeButton $w={19} $ml={3} $tone="dark">
        <LineIcon />
      </RangeButton>
      <RangeButton $w={19} $tone="active">
        <CandleIcon />
      </RangeButton>
      <RangeButton $w={22} $ml={4} $tone="dark">
        <Caret />
      </RangeButton>
      <RangeButton $w={51} $tone="dark">
        Table
      </RangeButton>
      <RangeSpacer />
      <RangeButton $w={16} $tone="raised">
        <ChevronsLeft size={13} strokeWidth={3} />
      </RangeButton>
      <RangeButton $w={147} $tone="raised">
        <EditChartIcon /> Edit Chart
      </RangeButton>
      <RangeButton $w={92} $tone="raised">
        <FaCog size={11} color="#cfcfcf" />
      </RangeButton>
    </RangeRow>
    <PricePanel>
      <PriceChart />
      <FloatBar>
        <FloatButton $w={63}>
          <CrossIcon /> Track
        </FloatButton>
        <FloatButton $w={80}>
          <AnnotateIcon /> Annotate
        </FloatButton>
        <FloatButton $w={60}>
          <NewsIcon /> News
        </FloatButton>
        <FloatButton $w={62}>
          <Search size={12} color="#777" /> Zoom
        </FloatButton>
      </FloatBar>
      <ResetButton>
        <RadioDot /> Reset
      </ResetButton>
      <Legend>
        <LegendRow>
          <ExpandBox />
          <Swatch $color="#fff" />
          <LegendName>Last Price</LegendName>
          <LegendValue>17.84</LegendValue>
        </LegendRow>
        <LegendRow>
          <TreeCell />
          <HighMark />
          <LegendName>High on 08/25/20</LegendName>
          <LegendValue>17.87</LegendValue>
        </LegendRow>
        <LegendRow>
          <TreeCell />
          <AvgMark />
          <LegendName>Average</LegendName>
          <LegendValue $indent>5.2341</LegendValue>
        </LegendRow>
        <LegendRow>
          <TreeCell />
          <LowMark />
          <LegendName>Low on 10/02/19</LegendName>
          <LegendValue $indent>1.19</LegendValue>
        </LegendRow>
        <LegendRow>
          <TreeCell />
          <Swatch $color="#ec0a93" />
          <LegendName>SMAVG (50)  on Close</LegendName>
          <LegendValue>11.8028</LegendValue>
        </LegendRow>
        <LegendRow>
          <TreeCell />
          <Swatch $color="#1fbd3f" />
          <LegendName>SMAVG (100)  on Close</LegendName>
          <LegendValue $indent>7.8319</LegendValue>
        </LegendRow>
        <LegendRow>
          <TreeCell $last />
          <Swatch $color="#fff21a" />
          <LegendName>SMAVG (200)  on Close</LegendName>
          <LegendValue $indent>5.5143</LegendValue>
        </LegendRow>
      </Legend>
      <Tag $top={31} $bg="#fff" $fg="#222">17.84</Tag>
      <Tag $top={173} $bg="#ec0a93" $fg="#fff">11.8028</Tag>
      <Tag $top={267} $bg="#1fbd3f" $fg="#fff">7.8319</Tag>
      <Tag $top={322} $bg="#fff21a" $fg="#333">5.5143</Tag>
    </PricePanel>
    <Divider>
      <Grip />
    </Divider>
    <VolumePanel>
      <VolumeChart />
      <VolumeLegend>
        <ExpandBox $plus />
        <Swatch $color="#6f88ae" />
        <VolumeName>Volume</VolumeName>
        299.0478M
      </VolumeLegend>
      <Tag $top={69} $bg="#6c86ab" $fg="#10182a">299.0478M</Tag>
      <Tag $top={118} $bg="#fff" $fg="#222">88.83874M</Tag>
    </VolumePanel>
  </Page>
);

export default App;
